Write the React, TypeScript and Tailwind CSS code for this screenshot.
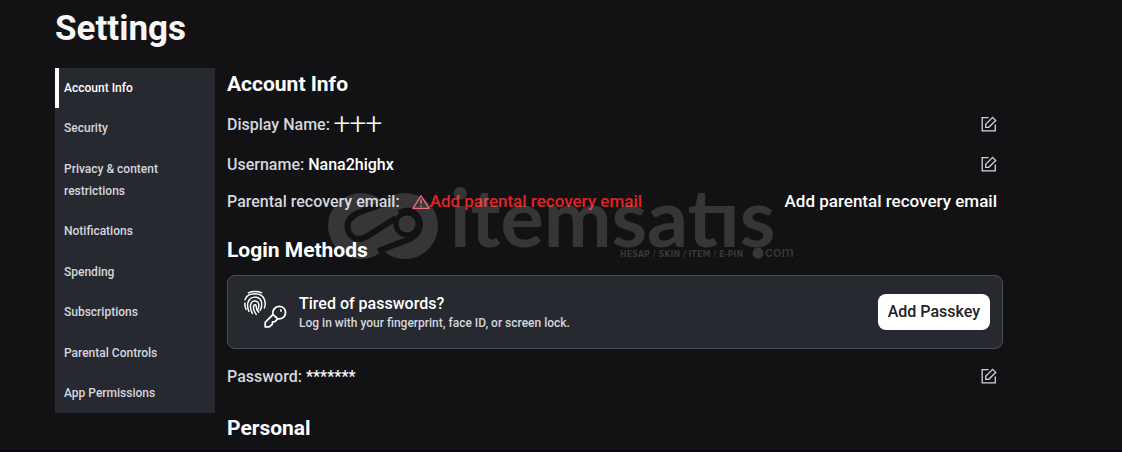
import React from 'react';
import clsx from 'clsx';

const navItems = [
  'Account Info',
  'Security',
  'Privacy & content restrictions',
  'Notifications',
  'Spending',
  'Subscriptions',
  'Parental Controls',
  'App Permissions',
];

const EditIcon = () => (
  <svg viewBox="0 0 16 16" className="w-4 h-4" fill="none" stroke="currentColor" strokeWidth="1.3">
    <path d="M7.5 1.7H1.2v13.1h13.1V8.5" />
    <path d="M4.7 11.3V8.2l6.9-6.9 3.1 3.1-6.9 6.9z" />
  </svg>
);

const WarningIcon = () => (
  <svg viewBox="0 0 18 16" className="w-[18px] h-4" fill="none" stroke="currentColor" strokeWidth="1.3">
    <path d="M9 1.6 17 14.4H1z" strokeLinejoin="round" />
    <path d="M9 5.5v4.3M9 11.2v1.5" strokeWidth="1.5" />
  </svg>
);

const PasskeyIcon = () => (
  <svg
    viewBox="0 0 44 38"
    className="w-[43px] h-[38px] shrink-0"
    fill="none"
    stroke="currentColor"
    strokeLinecap="round"
    strokeLinejoin="round"
  >
    <g strokeWidth="1.5">
      <path d="M4.5 2.4C8 .6 14.5.6 18 2.4" />
      <path d="M1 9.5C4 1.5 18 1.5 21 9.5c1 3 .9 6-.2 8.5" />
      <path d="M1 13c-.2 2.2.1 4.5 1.2 6.5" />
      <path d="M5 21.500c-1.800-4.500-1.800-9 .4-12C9 5 17 6.500 18 12.500c.4 3.200-.1 5.800-1.500 8" />
      <path d="M8.500 23.500c-2-4-2.600-8.500-.7-11.300 2-2.500 6.500-1.700 7.200 1.500.4 2.400 0 4.800-1.200 6.800" />
      <path d="M12.500 24.500c-2.400-3-3.200-6.800-2.400-9 .6-1.400 2.200-1 2.300.4.1 2.200.8 4.600 2.600 6.500" />
    </g>
    <g strokeWidth="1.8">
      <path d="M29.500 24.800c-.8-4.500 2.200-8.500 6.500-8.500 3.800 0 6.500 2.700 6.500 6.300 0 4-3.300 7-7.800 6.500L31.500 32l-2.300.2-.3 2.500-3 2.500h-4.200v-4.500z" />
      <path d="m30 25 4.500 4" />
      <path d="M37.800 20.200v.8" />
    </g>
  </svg>
);

const Watermark = () => (
  <svg
    viewBox="0 0 470 72"
    className="absolute left-[101px] top-[125px] w-[470px] h-[72px] overflow-visible pointer-events-none text-white opacity-15"
    fill="currentColor"
    aria-hidden="true"
  >
    <mask id="link">
      <circle cx="33" cy="33" r="33" fill="white" />
      <circle cx="77" cy="33" r="33" fill="white" />
      <g fill="none" stroke="black" strokeWidth="6">
        <path d="M60 9 30 20Q17 26 20 37Q25 50 38 44L68 25" />
        <path d="M50 58 82 46Q95 38 91 26Q84 13 71 20" />
        <circle cx="79" cy="31" r="11" strokeWidth="5" />
      </g>
      <path d="M48 0h14l-7 9zM48 66h14l-8-10z" fill="black" />
      <circle cx="79" cy="31" r="8" fill="white" />
    </mask>
    <rect width="110" height="66" mask="url(#link)" />
    <text x="122" y="54" fontFamily="Lato" fontWeight="700" fontSize="81">itemsatıs</text>
    <circle cx="430" cy="60" r="5.5" />
    <text x="292" y="64" fontFamily="DejaVu Sans" fontWeight="700" fontSize="8">HESAP / SKIN / ITEM / E-PIN</text>
    <text x="437" y="64" fontFamily="Inter" fontWeight="500" fontSize="14">com</text>
  </svg>
);

interface InfoRowProps {
  label: string;
  value: string;
  className?: string;
}

const InfoRow: React.FC<InfoRowProps> = ({ label, value, className }) => (
  <div className={clsx('flex items-center justify-between pr-1.5 h-10', className)}>
    <p className="pt-0.5">
      {label}: <span className="text-white">{value}</span>
    </p>
    <button type="button" aria-label={`Edit ${label}`} className="text-gray-300">
      <EditIcon />
    </button>
  </div>
);

export default function App() {
  return (
    <div className="min-h-screen border-b-2 border-[#0d0611] bg-[#121215] font-['Roboto','Noto_Sans_CJK_SC',sans-serif] text-[#d5d7dd]">
      <div className="max-w-[1003px] pl-[55px] pt-[9px]">
        <h1 className="text-[35px] leading-10 font-bold text-[#f7f7f8]">Settings</h1>

        <div className="flex items-start gap-3 pt-[19px]">
          <nav className="flex flex-col justify-between w-40 h-[345px] shrink-0 bg-[#272930] text-xs leading-[22px] font-medium">
            {navItems.map((item, i) => (
              <a
                key={item}
                href="#"
                className={clsx(
                  'block pr-8 py-[9px] border-l-4 pl-[5px]',
                  i === 0 ? 'border-white text-white' : 'border-transparent'
                )}
              >
                {item}
              </a>
            ))}
          </nav>

          <main className="relative flex-1 font-medium text-base">
            <h2 className="text-[21px] leading-8 font-bold text-white">Account Info</h2>
            <InfoRow label="Display Name" value="十十十" className="mt-1" />
            <InfoRow label="Username" value="Nana2highx" />
            <div className="flex items-center justify-between pr-1.5 h-9">
              <p className="flex items-center">
                Parental recovery email:
                <span className="flex items-center ml-3 text-[17px] text-[#e02424]">
                  <span className="text-[#e85a5f]">
                    <WarningIcon />
                  </span>
                  Add parental recovery email
                </span>
              </p>
              <button type="button" className="text-[17px] text-white">
                Add parental recovery email
              </button>
            </div>

            <h2 className="mt-3.5 text-[21px] leading-8 font-bold text-white">Login Methods</h2>
            <section className="flex items-center mt-[9px] h-[74px] pl-4 pr-3 rounded-lg border border-[#4d4e54] bg-[#272930]">
              <span className="-mt-1.5 text-white">
                <PasskeyIcon />
              </span>
              <div className="flex-1 ml-3 pt-0.5">
                <h3 className="text-base leading-5 text-white">Tired of passwords?</h3>
                <p className="text-xs leading-[18px]">Log in with your fingerprint, face ID, or screen lock.</p>
              </div>
              <button type="button" className="h-9 px-2.5 rounded-lg bg-white text-[#202227]">
                Add Passkey
              </button>
            </section>
            <InfoRow label="Password" value="*******" className="mt-[7px]" />

            <h2 className="mt-4 text-[21px] leading-8 font-bold text-white">Personal</h2>
            <Watermark />
          </main>
        </div>
      </div>
    </div>
  );
}
